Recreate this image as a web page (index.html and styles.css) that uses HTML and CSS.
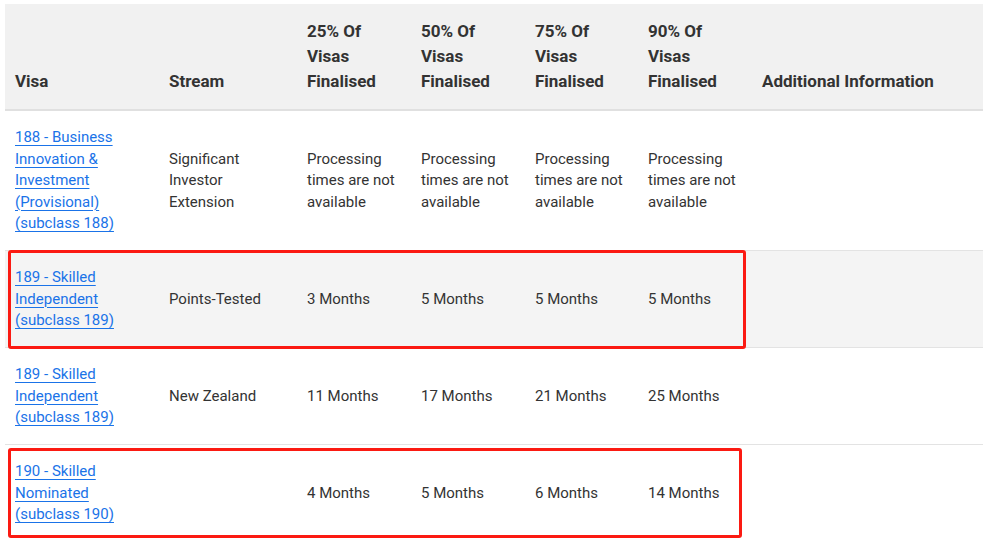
FILE: index.html
```html
<!DOCTYPE html>
<html>
<head>
<meta charset="utf-8">
<link rel="stylesheet" href="styles.css">
</head>
<body>
<div class="page">
  <table class="visa-table">
    <colgroup>
      <col class="c-visa"><col class="c-stream"><col class="c-p"><col class="c-p"><col class="c-p2"><col class="c-p"><col>
    </colgroup>
    <thead>
      <tr>
        <th>Visa</th>
        <th>Stream</th>
        <th>25% Of Visas Finalised</th>
        <th>50% Of Visas Finalised</th>
        <th>75% Of Visas Finalised</th>
        <th>90% Of Visas Finalised</th>
        <th>Additional Information</th>
      </tr>
    </thead>
    <tbody>
      <tr>
        <td><a href="#">188 - Business Innovation &amp; Investment (Provisional) (subclass 188)</a></td>
        <td>Significant Investor Extension</td>
        <td>Processing times are not available</td>
        <td>Processing times are not available</td>
        <td>Processing times are not available</td>
        <td>Processing times are not available</td>
        <td></td>
      </tr>
      <tr class="alt">
        <td><a href="#">189 - Skilled Independent (subclass 189)</a></td>
        <td>Points-Tested</td>
        <td>3 Months</td>
        <td>5 Months</td>
        <td>5 Months</td>
        <td>5 Months</td>
        <td></td>
      </tr>
      <tr>
        <td><a href="#">189 - Skilled Independent (subclass 189)</a></td>
        <td>New Zealand</td>
        <td>11 Months</td>
        <td>17 Months</td>
        <td>21 Months</td>
        <td>25 Months</td>
        <td></td>
      </tr>
      <tr>
        <td><a href="#">190 - Skilled Nominated (subclass 190)</a></td>
        <td></td>
        <td>4 Months</td>
        <td>5 Months</td>
        <td>6 Months</td>
        <td>14 Months</td>
        <td></td>
      </tr>
    </tbody>
  </table>
  <div class="mark mark-1"></div>
  <div class="mark mark-2"></div>
</div>
</body>
</html>
```
FILE: styles.css
```css
html, body {
  margin: 0;
  padding: 0;
  background: #fff;
}
.page {
  position: relative;
  padding: 4px 0 0 5px;
  font-family: Roboto, "Liberation Sans", sans-serif;
  color: #333;
}
.visa-table {
  width: 978px;
  border-collapse: collapse;
  table-layout: fixed;
}
.c-visa { width: 154px; }
.c-stream { width: 138px; }
.c-p { width: 114px; }
.c-p2 { width: 113px; }
.visa-table th {
  background: #f1f1f1;
  text-align: left;
  vertical-align: bottom;
  font-weight: 700;
  font-size: 17px;
  line-height: 25px;
  padding: 15px 10px 15px 10px;
  border-bottom: 2px solid #e0e0e0;
}
.visa-table td {
  font-size: 15px;
  line-height: 21.5px;
  padding: 16px 10px 15.5px 10px;
  vertical-align: middle;
  border-bottom: 1px solid #e3e3e3;
}
.visa-table tr.alt td {
  background: #f4f4f4;
}
.visa-table a {
  color: #1a73e8;
  text-decoration: underline;
  text-decoration-thickness: 1px;
  text-underline-offset: 3px;
}
.mark {
  position: absolute;
  border: 3px solid #fb1a12;
  border-radius: 3px;
  box-sizing: border-box;
}
.mark-1 {
  left: 8px;
  top: 250px;
  width: 738px;
  height: 99px;
}
.mark-2 {
  left: 8px;
  top: 448px;
  width: 734px;
  height: 90px;
}
```
